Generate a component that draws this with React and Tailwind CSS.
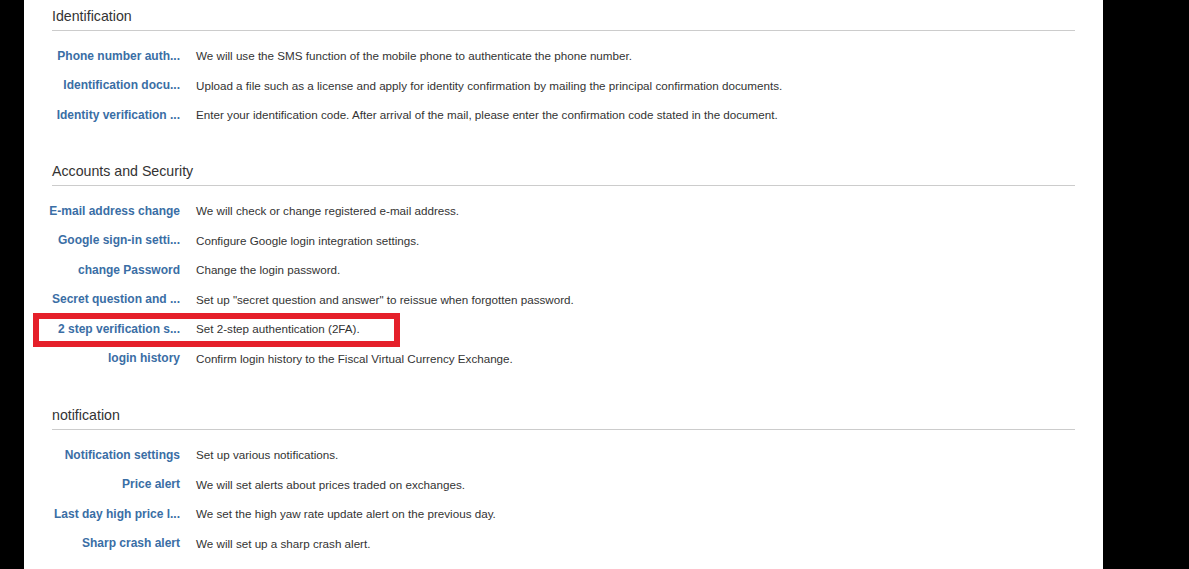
import React from "react";

const sections = [
  {
    title: "Identification",
    rows: [
      ["Phone number auth...", "We will use the SMS function of the mobile phone to authenticate the phone number."],
      ["Identification docu...", "Upload a file such as a license and apply for identity confirmation by mailing the principal confirmation documents."],
      ["Identity verification ...", "Enter your identification code. After arrival of the mail, please enter the confirmation code stated in the document."],
    ],
  },
  {
    title: "Accounts and Security",
    rows: [
      ["E-mail address change", "We will check or change registered e-mail address."],
      ["Google sign-in setti...", "Configure Google login integration settings."],
      ["change Password", "Change the login password."],
      ["Secret question and ...", "Set up \"secret question and answer\" to reissue when forgotten password."],
      ["2 step verification s...", "Set 2-step authentication (2FA)."],
      ["login history", "Confirm login history to the Fiscal Virtual Currency Exchange."],
    ],
  },
  {
    title: "notification",
    rows: [
      ["Notification settings", "Set up various notifications."],
      ["Price alert", "We will set alerts about prices traded on exchanges."],
      ["Last day high price l...", "We set the high yaw rate update alert on the previous day."],
      ["Sharp crash alert", "We will set up a sharp crash alert."],
    ],
  },
];

function Section({ title, rows, className }) {
  return (
    <section className={className}>
      <h2 className="pt-[6px] pb-[4px] h-[31px] text-[14.2px] leading-[20px] text-[#333] border-b border-[#cccccc] font-normal">
        {title}
      </h2>
      <div className="mt-[10px]">
        {rows.map(([label, desc]) => (
          <div key={label} className="flex items-center h-[29.5px]">
            <div className="flex justify-end w-[128px] shrink-0">
              <a className="whitespace-nowrap font-bold text-[12px] text-[#3a6ea5] cursor-pointer">
                {label}
              </a>
            </div>
            <p className="ml-[16px] text-[11.65px] text-[#333] whitespace-nowrap">{desc}</p>
          </div>
        ))}
      </div>
    </section>
  );
}

export default function App() {
  return (
    <div className="flex w-[1189px] h-[569px] bg-black overflow-hidden" style={{ fontFamily: "'Liberation Sans', Arial, sans-serif" }}>
      <div className="w-[24px] shrink-0 bg-black" />
      <main className="relative w-[1079px] shrink-0 bg-white px-[28px] text-[12px]">
        <Section title={sections[0].title} rows={sections[0].rows} />
        <Section className="mt-[25.5px]" title={sections[1].title} rows={sections[1].rows} />
        <Section className="mt-[26px]" title={sections[2].title} rows={sections[2].rows} />
        <div className="absolute left-[9px] top-[313px] w-[367px] h-[34px] border-[6px] border-[#e5202a]" />
      </main>
      <div className="flex-1 bg-black" />
    </div>
  );
}
